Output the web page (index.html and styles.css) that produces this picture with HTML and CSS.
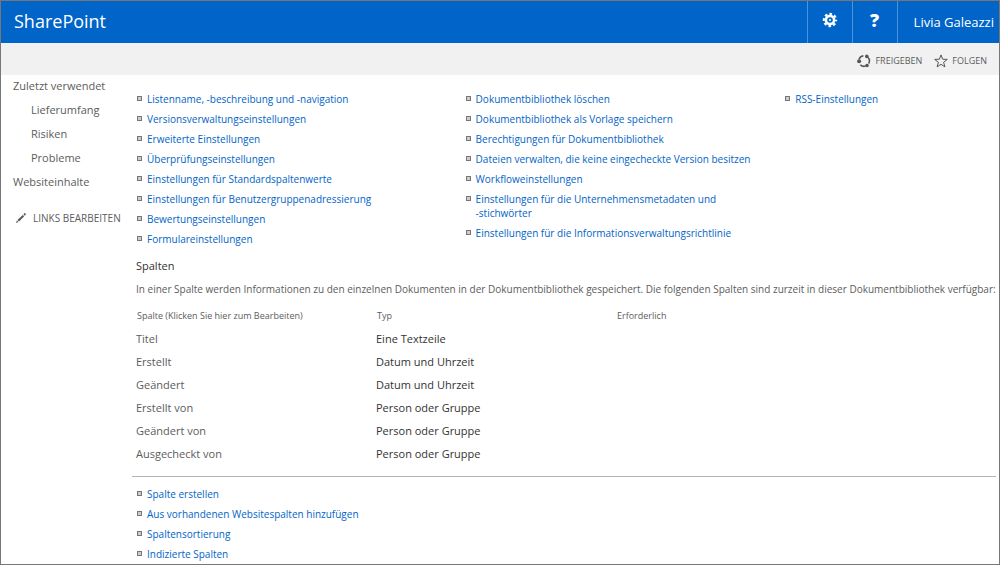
FILE: index.html
```html
<!DOCTYPE html>
<html lang="de">
<head>
<meta charset="utf-8">
<meta name="viewport" content="width=device-width, initial-scale=1">
<title>SharePoint – Einstellungen der Dokumentbibliothek</title>
<link rel="stylesheet" href="styles.css">
</head>
<body>
<div class="page">
  <header class="suite-bar">
    <a class="brand" href="#">SharePoint</a>
    <button class="suite-button" type="button" aria-label="Einstellungen">
      <svg class="suite-icon" viewBox="0 0 16 16" aria-hidden="true">
        <g fill="none" stroke="#fff">
          <circle cx="8" cy="8" r="4.1" stroke-width="2.6"/>
          <circle cx="8" cy="8" r="6.1" stroke-width="2.2" stroke-dasharray="2.6 2.191" stroke-dashoffset="1.3"/>
        </g>
        <circle cx="8" cy="8" r="1.1" fill="#fff"/>
      </svg>
    </button>
    <button class="suite-button help" type="button" aria-label="Hilfe">?</button>
    <button class="suite-button user" type="button">Livia Galeazzi</button>
  </header>

  <div class="action-bar">
    <button class="action" type="button">
      <svg class="action-icon" viewBox="0 0 14 14" aria-hidden="true">
        <g fill="none" stroke="#555" stroke-width="1.5">
          <path d="M2 5.4A5.3 5.3 0 0 1 6.4 1.7"/>
          <path d="M10.6 3A5.3 5.3 0 0 1 11.6 9.6"/>
          <path d="M8.6 12.1A5.3 5.3 0 0 1 3.4 10.9"/>
        </g>
        <g fill="#555">
          <circle cx="9.8" cy="2.4" r="1.8"/>
          <circle cx="2.1" cy="7.3" r="2"/>
          <circle cx="10" cy="11.5" r="1.8"/>
        </g>
      </svg>
      FREIGEBEN
    </button>
    <button class="action" type="button">
      <svg class="action-icon" viewBox="0 0 14 14" aria-hidden="true">
        <path d="M7 .9 8.6 5.2 13.3 5.4 9.6 8.3 10.9 12.9 7 10.3 3.1 12.9 4.4 8.3 .7 5.4 5.4 5.2Z" fill="none" stroke="#555" stroke-width="1"/>
      </svg>
      FOLGEN
    </button>
  </div>

  <div class="body">
    <nav class="side-nav" aria-label="Schnellstart">
      <a href="#">Zuletzt verwendet</a>
      <a class="nested" href="#">Lieferumfang</a>
      <a class="nested" href="#">Risiken</a>
      <a class="nested" href="#">Probleme</a>
      <a href="#">Websiteinhalte</a>
      <a class="edit-links" href="#">
        <svg class="pencil" viewBox="0 0 12 12" aria-hidden="true">
          <path d="M1 11 1.9 8.6 3.4 10.1ZM2.5 8 7.8 2.9 9.2 4.3 4 9.5ZM8.4 2.3 9.4 1.3Q10 .8 10.5 1.4T10.7 2.7L9.8 3.7Z" fill="#555"/>
        </svg>
        LINKS BEARBEITEN
      </a>
    </nav>

    <main class="content">
      <div class="settings">
        <ul class="links">
          <li><a href="#">Listenname, -beschreibung und -navigation</a></li>
          <li><a href="#">Versionsverwaltungseinstellungen</a></li>
          <li><a href="#">Erweiterte Einstellungen</a></li>
          <li><a href="#">Überprüfungseinstellungen</a></li>
          <li><a href="#">Einstellungen für Standardspaltenwerte</a></li>
          <li><a href="#">Einstellungen für Benutzergruppenadressierung</a></li>
          <li><a href="#">Bewertungseinstellungen</a></li>
          <li><a href="#">Formulareinstellungen</a></li>
        </ul>
        <ul class="links">
          <li><a href="#">Dokumentbibliothek löschen</a></li>
          <li><a href="#">Dokumentbibliothek als Vorlage speichern</a></li>
          <li><a href="#">Berechtigungen für Dokumentbibliothek</a></li>
          <li><a href="#">Dateien verwalten, die keine eingecheckte Version besitzen</a></li>
          <li><a href="#">Workfloweinstellungen</a></li>
          <li><a href="#">Einstellungen für die Unternehmensmetadaten und<br>-stichwörter</a></li>
          <li><a href="#">Einstellungen für die Informationsverwaltungsrichtlinie</a></li>
        </ul>
        <ul class="links">
          <li><a href="#">RSS-Einstellungen</a></li>
        </ul>
      </div>

      <h2 class="section-title">Spalten</h2>
      <p class="description">In einer Spalte werden Informationen zu den einzelnen Dokumenten in der Dokumentbibliothek gespeichert. Die folgenden Spalten sind zurzeit in dieser Dokumentbibliothek verfügbar:</p>

      <div class="columns-section">
        <table class="columns">
          <thead>
            <tr><th class="col-name" scope="col">Spalte (Klicken Sie hier zum Bearbeiten)</th><th class="col-type" scope="col">Typ</th><th scope="col">Erforderlich</th></tr>
          </thead>
          <tbody>
            <tr><td><a href="#">Titel</a></td><td>Eine Textzeile</td><td></td></tr>
            <tr><td><a href="#">Erstellt</a></td><td>Datum und Uhrzeit</td><td></td></tr>
            <tr><td><a href="#">Geändert</a></td><td>Datum und Uhrzeit</td><td></td></tr>
            <tr><td><a href="#">Erstellt von</a></td><td>Person oder Gruppe</td><td></td></tr>
            <tr><td><a href="#">Geändert von</a></td><td>Person oder Gruppe</td><td></td></tr>
            <tr><td><a href="#">Ausgecheckt von</a></td><td>Person oder Gruppe</td><td></td></tr>
          </tbody>
        </table>
      </div>

      <ul class="links column-actions">
        <li><a href="#">Spalte erstellen</a></li>
        <li><a href="#">Aus vorhandenen Websitespalten hinzufügen</a></li>
        <li><a href="#">Spaltensortierung</a></li>
        <li><a href="#">Indizierte Spalten</a></li>
      </ul>
    </main>
  </div>
</div>
</body>
</html>
```

FILE: styles.css
```css
*,
*::before {
  box-sizing: border-box;
}

body {
  margin: 0;
  font-family: "Open Sans", "Noto Sans", sans-serif;
  font-size: 10px;
  line-height: 14px;
  color: #5c5c5c;
  background: #fff;
}

a {
  color: inherit;
  text-decoration: none;
}

a:hover {
  text-decoration: underline;
}

button {
  border: 0;
  padding: 0;
  background: none;
  color: inherit;
  font: inherit;
  cursor: pointer;
}

.page {
  min-height: 100vh;
  border: 1px solid #777;
}

/* Top bar */
.suite-bar {
  display: flex;
  height: 42px;
  background: #0064c8;
  color: #fff;
}

.brand {
  flex: 1;
  padding-left: 13px;
  font-size: 18px;
  line-height: 40px;
}

.suite-button {
  display: flex;
  align-items: center;
  justify-content: center;
  width: 45px;
  padding-bottom: 4px;
  border-left: 1px solid #4d93d9;
}

.suite-icon {
  width: 16px;
  height: 16px;
}

.help {
  font-size: 18px;
  font-weight: 800;
}

.user {
  width: auto;
  padding: 0 5px 0 16px;
  font-size: 13px;
}

/* Share and follow */
.action-bar {
  display: flex;
  align-items: center;
  justify-content: flex-end;
  gap: 12px;
  height: 32px;
  padding: 4px 12px 0 0;
  background: #f1f1f1;
}

.action {
  display: flex;
  align-items: center;
  gap: 4px;
  font-size: 9px;
}

.action-icon {
  width: 14px;
  height: 14px;
}

.body {
  display: flex;
}

/* Left navigation */
.side-nav {
  display: flex;
  flex: none;
  flex-direction: column;
  gap: 8px;
  width: 131px;
  padding: 3px 0 0 12px;
  font-size: 11px;
  line-height: 16px;
}

.nested {
  padding-left: 18px;
}

.edit-links {
  display: flex;
  align-items: center;
  gap: 6px;
  margin-top: 12px;
  padding-left: 2px;
  font-size: 10px;
  white-space: nowrap;
}

.pencil {
  width: 12px;
  height: 12px;
}

/* Library settings */
.content {
  flex: 1;
  min-width: 0;
  padding: 17px 0 3px;
}

.settings {
  display: grid;
  grid-template-columns: 329fr 320fr 214fr;
  padding-left: 5px;
}

.links {
  display: flex;
  flex-direction: column;
  gap: 6px;
  margin: 0;
  padding: 0;
  list-style: none;
  color: #0064c8;
}

.links li {
  display: flex;
  gap: 5px;
}

.links li::before {
  flex: none;
  width: 5px;
  height: 5px;
  margin-top: 4px;
  border: 1px solid #777;
  background: #ccc;
  content: "";
}

.section-title {
  margin: 12px 0 0 4px;
  color: #333;
  font-size: 11px;
  font-weight: 400;
  line-height: 16px;
}

.description {
  margin: 8px 0 0 4px;
}

.columns-section {
  margin: 9px 3px 0 0;
  padding-bottom: 11px;
  border-bottom: 1px solid #b4b4b4;
}

.columns {
  width: 100%;
  border-collapse: collapse;
  table-layout: fixed;
}

.columns th {
  height: 22px;
  padding: 0 0 0 5px;
  font-size: 9px;
  font-weight: 400;
  text-align: left;
}

.columns td {
  height: 23px;
  padding: 0 0 0 4px;
  color: #333;
  font-size: 11px;
}

.columns td:first-child {
  color: #5c5c5c;
}

.col-name,
.col-type {
  width: 240px;
}

.column-actions {
  padding: 10px 0 0 5px;
}
```
